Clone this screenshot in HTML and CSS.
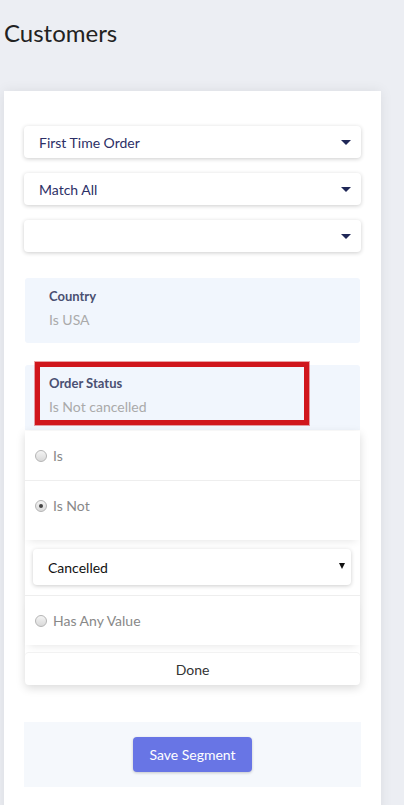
FILE: index.html
```html
<!DOCTYPE html>
<html lang="en">
<head>
    <meta charset="UTF-8">
    <meta name="viewport" content="width=device-width, initial-scale=1.0">
    <title>Customers</title>
    <link rel="stylesheet" href="styles.css">
</head>
<body>
    <h1 class="page-title">Customers</h1>
    <div class="card">
        <div class="dropdown">First Time Order<span class="caret"></span></div>
        <div class="dropdown">Match All<span class="caret"></span></div>
        <div class="dropdown"><span class="caret"></span></div>

        <div class="filter">
            <div class="filter-name">Country</div>
            <div class="filter-value">Is USA</div>
        </div>

        <div class="filter filter-open">
            <div class="filter-name">Order Status</div>
            <div class="filter-value">Is Not cancelled</div>
            <div class="highlight"></div>
        </div>

        <div class="popover">
            <label class="option option-line"><span class="radio"></span>Is</label>
            <div class="option-group spaced">
                <label class="option"><span class="radio checked"></span>Is Not</label>
            </div>
            <div class="select-wrap">
                <div class="select">Cancelled<span class="select-caret"></span></div>
            </div>
            <div class="option-group">
                <label class="option"><span class="radio"></span>Has Any Value</label>
            </div>
            <div class="done">Done</div>
        </div>

        <div class="save-bar">
            <button class="save-btn">Save Segment</button>
        </div>
    </div>
</body>
</html>
```

FILE: styles.css
```css
body {
    font-family: Lato, "Open Sans", sans-serif;
    background-color: #eceef3;
    color: #333;
    margin: 0;
    padding: 0 23px 0 4px;
}
.page-title {
    margin: 18px 0 44px;
    font-size: 24px;
    font-weight: 400;
    line-height: 29px;
    color: #222;
}
.card {
    background-color: #fff;
    padding: 35px 20px 30px;
    box-shadow: 0 0 12px rgba(0,0,0,0.08);
}
.dropdown {
    position: relative;
    height: 32px;
    margin-bottom: 15px;
    padding-left: 15px;
    display: flex;
    align-items: center;
    font-size: 14px;
    color: #2c2f66;
    background-color: #fff;
    border-radius: 4px;
    box-shadow: 0 1px 4px rgba(0,0,0,0.2);
}
.caret {
    position: absolute;
    right: 10px;
    top: 14px;
    border-left: 5px solid transparent;
    border-right: 5px solid transparent;
    border-top: 5px solid #1f2757;
}
.filter {
    position: relative;
    margin: 26px 1px 0;
    padding: 10px 24px 13px;
    background-color: #f1f6fd;
    border-radius: 3px;
}
.filter-open {
    margin-top: 22px;
    border-radius: 3px 3px 0 0;
}
.filter-name {
    font-size: 13px;
    font-weight: 700;
    line-height: 16px;
    color: #4a5072;
}
.filter-value {
    margin-top: 6px;
    font-size: 14px;
    line-height: 20px;
    color: #aaa;
}
.highlight {
    position: absolute;
    left: 10px;
    top: -3px;
    width: 264px;
    height: 53px;
    border: 5px solid #d0161c;
    box-shadow: 0 0 0 1px rgba(208,22,28,0.4);
}
.popover {
    position: relative;
    margin: 1px 1px 0;
    background-color: #fff;
    border-radius: 0 0 4px 4px;
    box-shadow: 0 3px 10px rgba(0,0,0,0.15);
}
.option {
    display: flex;
    align-items: center;
    height: 49px;
    padding-left: 10px;
    font-size: 14px;
    color: #888;
}
.option-line {
    border-bottom: 1px solid #eee;
}
.option-group {
    box-shadow: 0 5px 8px -4px rgba(0,0,0,0.1);
}
.option-group.spaced {
    padding-bottom: 10px;
}
.radio {
    width: 10px;
    height: 10px;
    margin-right: 6px;
    border: 1px solid #b5b5b5;
    border-radius: 50%;
    background: linear-gradient(#f4f4f4, #d9d9d9);
    display: flex;
    align-items: center;
    justify-content: center;
}
.radio.checked::after {
    content: "";
    width: 4px;
    height: 4px;
    border-radius: 50%;
    background-color: #444;
}
.select-wrap {
    padding: 9px 9px 10px 8px;
    border-bottom: 1px solid #eee;
}
.select {
    position: relative;
    height: 36px;
    padding-left: 15px;
    display: flex;
    align-items: center;
    font-size: 14px;
    color: #111;
    border-radius: 4px;
    box-shadow: 0 1px 4px rgba(0,0,0,0.2);
}
.select-caret {
    position: absolute;
    right: 6px;
    top: 14px;
    border-left: 3px solid transparent;
    border-right: 3px solid transparent;
    border-top: 6px solid #111;
}
.done {
    margin-top: 8px;
    height: 32px;
    display: flex;
    align-items: center;
    justify-content: center;
    font-size: 14px;
    color: #333;
    border-radius: 4px;
    box-shadow: 0 -1px 0 #f2f2f2;
}
.save-bar {
    margin-top: 37px;
    padding: 15px 0;
    display: flex;
    justify-content: center;
    background-color: #f5f8fc;
}
.save-btn {
    width: 119px;
    height: 35px;
    font-family: Lato, sans-serif;
    font-size: 14px;
    color: #fff;
    background-color: #6875e5;
    border: none;
    border-radius: 4px;
    box-shadow: 0 1px 3px rgba(0,0,0,0.2);
}
```
